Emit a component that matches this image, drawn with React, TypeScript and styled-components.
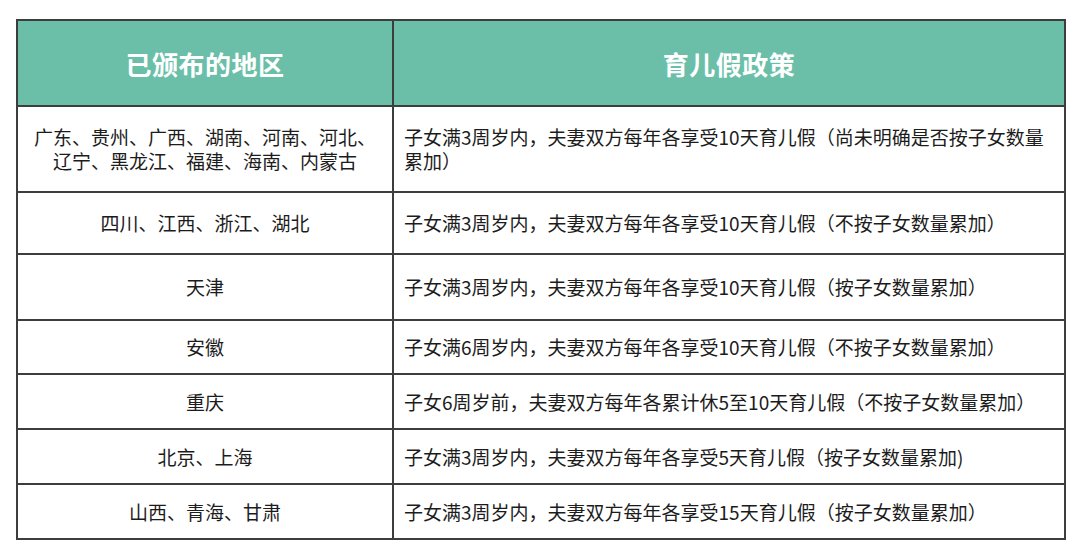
import React from 'react';
import styled, { createGlobalStyle } from 'styled-components';

interface IPolicyRow {
  region: string[];
  policy: string;
  height: number;
}

const rows: IPolicyRow[] = [
  {
    region: ['广东、贵州、广西、湖南、河南、河北、', '辽宁、黑龙江、福建、海南、内蒙古'],
    policy: '子女满3周岁内，夫妻双方每年各享受10天育儿假（尚未明确是否按子女数量累加）',
    height: 86,
  },
  {
    region: ['四川、江西、浙江、湖北'],
    policy: '子女满3周岁内，夫妻双方每年各享受10天育儿假（不按子女数量累加）',
    height: 62,
  },
  {
    region: ['天津'],
    policy: '子女满3周岁内，夫妻双方每年各享受10天育儿假（按子女数量累加）',
    height: 66,
  },
  {
    region: ['安徽'],
    policy: '子女满6周岁内，夫妻双方每年各享受10天育儿假（不按子女数量累加）',
    height: 54,
  },
  {
    region: ['重庆'],
    policy: '子女6周岁前，夫妻双方每年各累计休5至10天育儿假（不按子女数量累加）',
    height: 55,
  },
  {
    region: ['北京、上海'],
    policy: '子女满3周岁内，夫妻双方每年各享受5天育儿假（按子女数量累加)',
    height: 55,
  },
  {
    region: ['山西、青海、甘肃'],
    policy: '子女满3周岁内，夫妻双方每年各享受15天育儿假（按子女数量累加）',
    height: 55,
  },
];

const App: React.FC = () => {
  return (
    <>
      <GlobalStyle />
      <Page>
        <Table>
          <colgroup>
            <col style={{ width: 376 }} />
            <col style={{ width: 672 }} />
          </colgroup>
          <thead>
            <tr>
              <HeadCell>已颁布的地区</HeadCell>
              <HeadCell>育儿假政策</HeadCell>
            </tr>
          </thead>
          <tbody>
            {rows.map((row, idx) => (
              <tr key={idx} style={{ height: row.height }}>
                <RegionCell>
                  {row.region.map((line) => (
                    <Line key={line}>{line}</Line>
                  ))}
                </RegionCell>
                <PolicyCell>{row.policy}</PolicyCell>
              </tr>
            ))}
          </tbody>
        </Table>
      </Page>
    </>
  );
};

export default App;

const GlobalStyle = createGlobalStyle`
  body {
    margin: 0;
    background: #ffffff;
    font-family: "Noto Sans CJK SC", "Noto Sans", sans-serif;
  }
`;

const Page = styled.div`
  padding: 19px 0 0 16px;
`;

const Table = styled.table`
  border-collapse: collapse;
  table-layout: fixed;
  width: 1050px;
  color: #1c1c1c;

  td,
  th {
    border: 2px solid #3d3d3d;
  }
`;

const HeadCell = styled.th`
  height: 84px;
  padding: 0;
  background: #6bbfa8;
  color: #ffffff;
  font-size: 26px;
  font-weight: 700;
  text-align: center;
  vertical-align: middle;
  letter-spacing: 0.5px;
`;

const RegionCell = styled.td`
  padding: 0 6px;
  text-align: center;
  vertical-align: middle;
  font-size: 19px;
  line-height: 24px;
`;

const Line = styled.div`
  white-space: nowrap;
`;

const PolicyCell = styled.td`
  padding: 0 14px 0 10px;
  text-align: left;
  vertical-align: middle;
  font-size: 19px;
  line-height: 24px;
`;
